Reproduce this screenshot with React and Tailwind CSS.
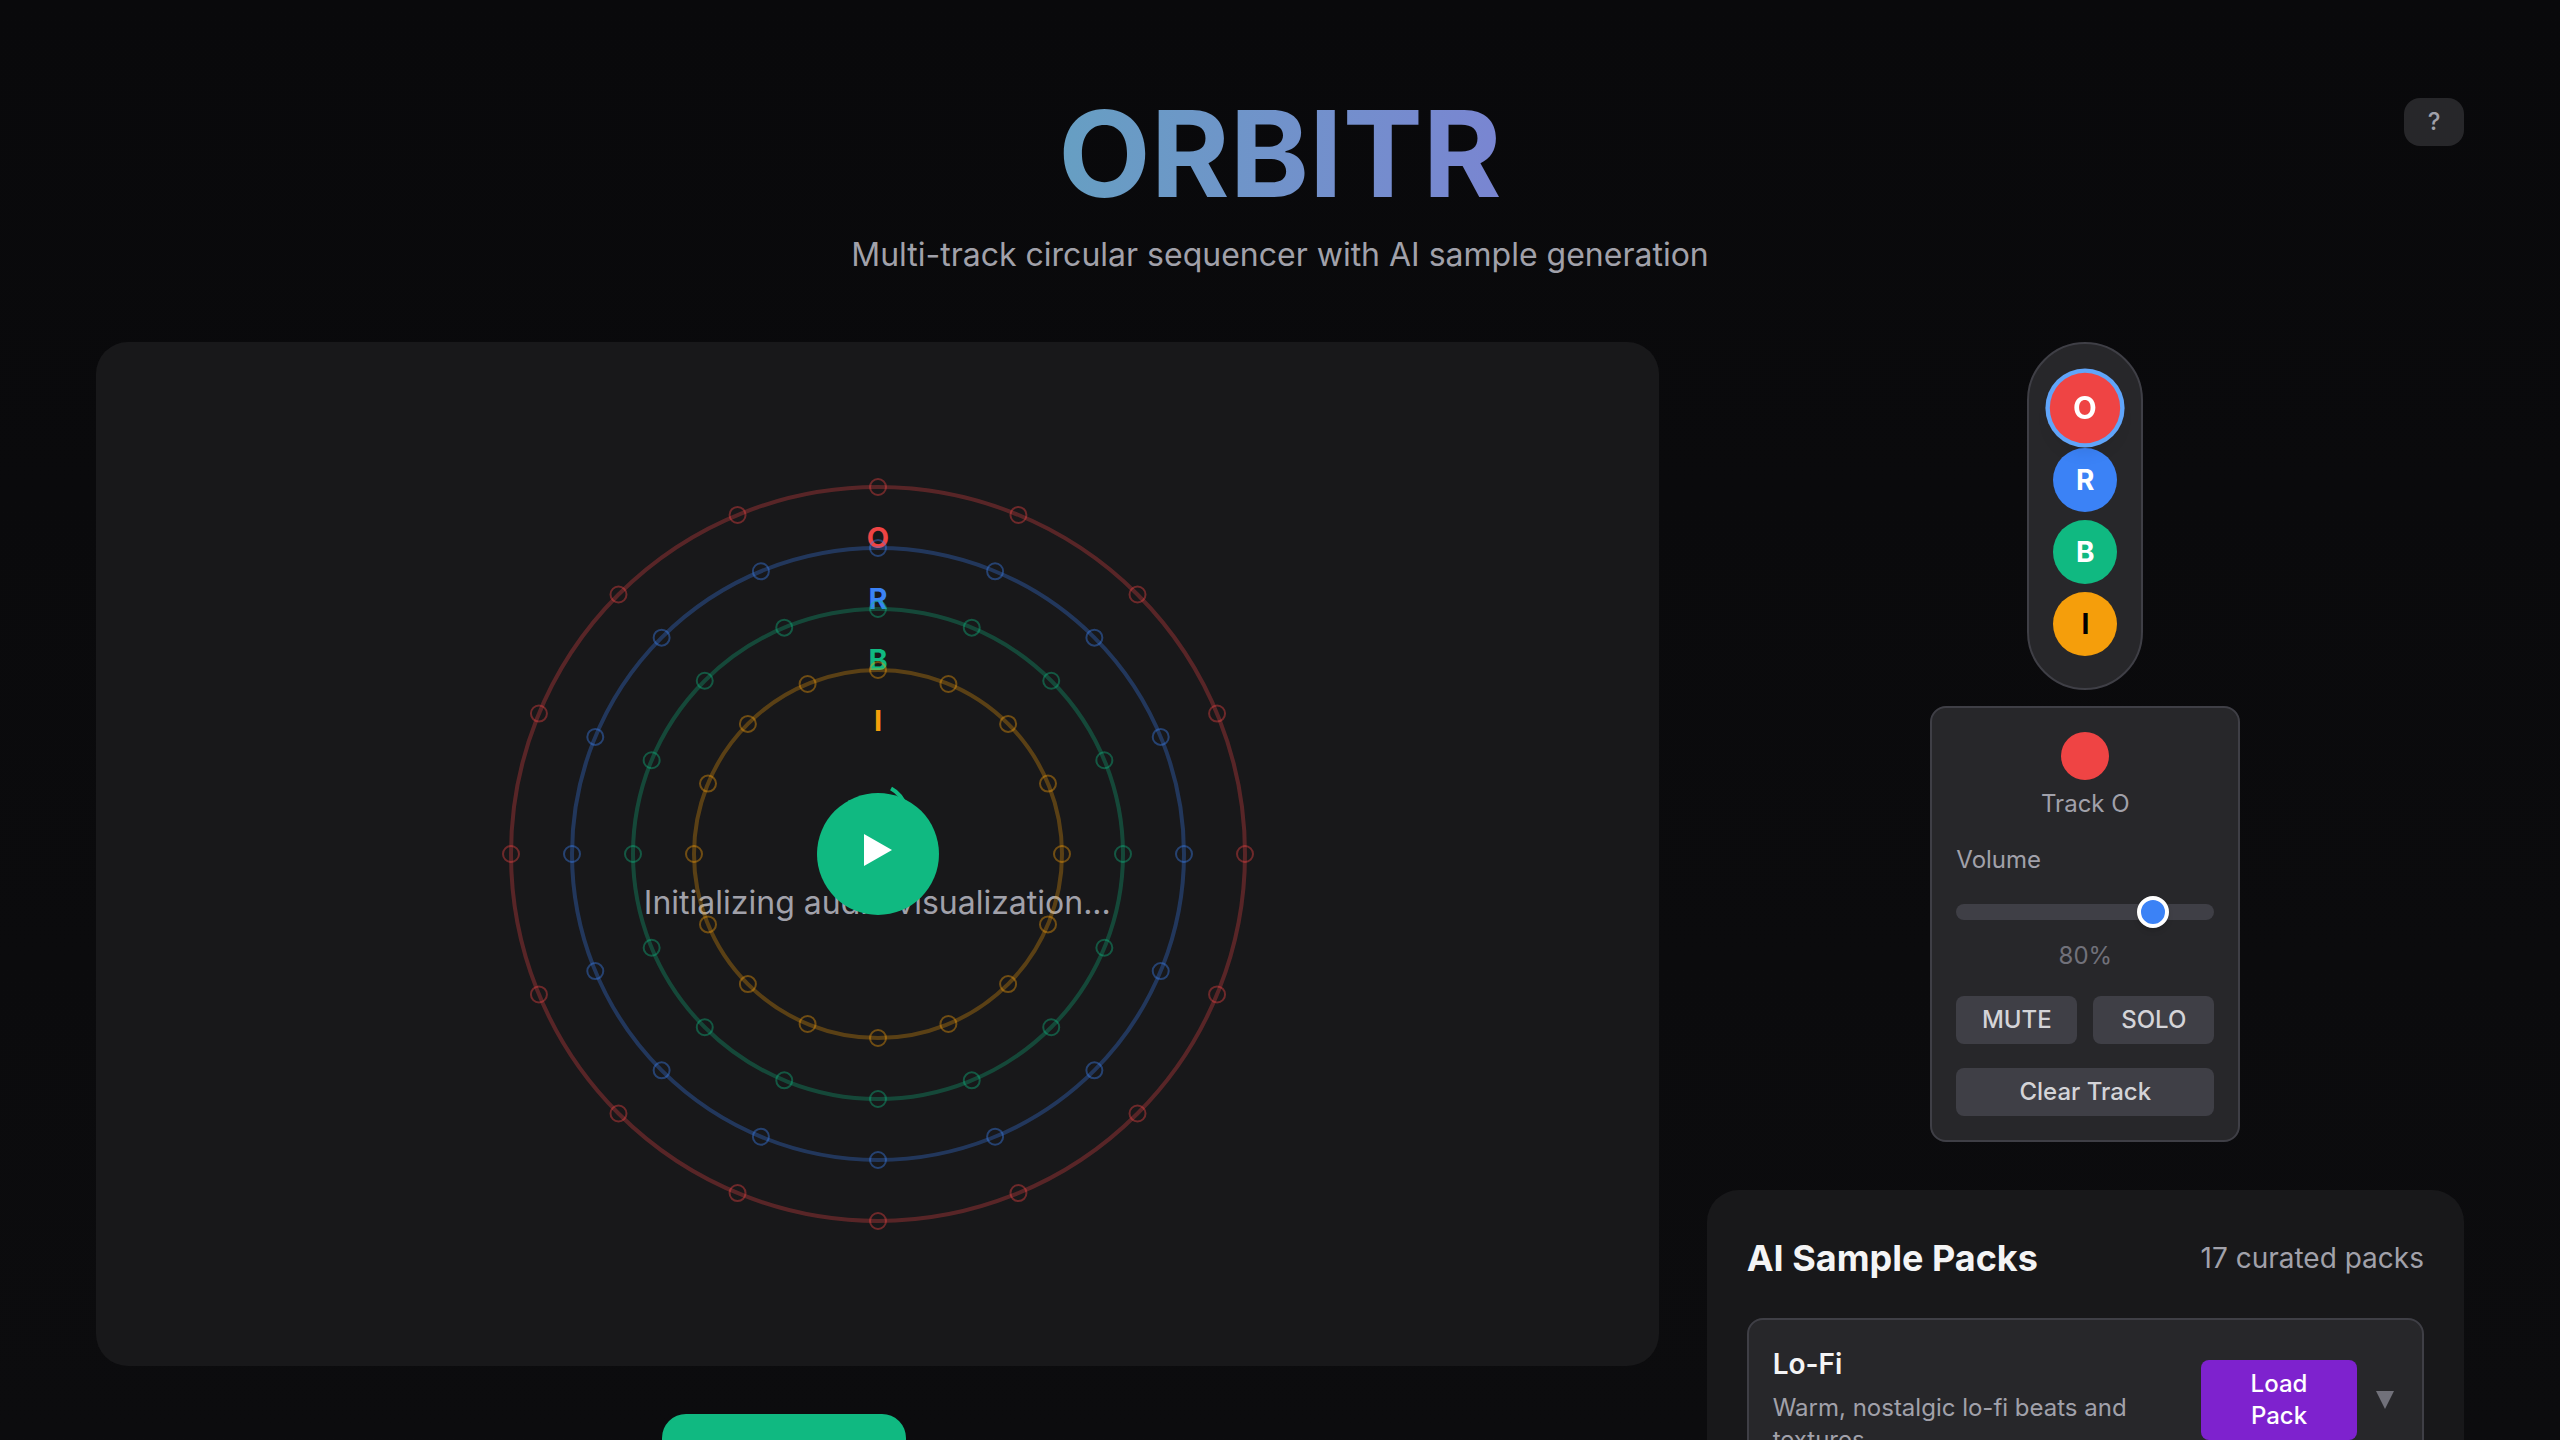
const TRACKS = [
  { name: "O", color: "#ef4444", radius: 367, button: "scale-110 bg-[#ef4444] text-white ring-4 ring-[#60a5fa] shadow-lg" },
  { name: "R", color: "#3b82f6", radius: 306, button: "bg-[#3b82f6] text-white" },
  { name: "B", color: "#10b981", radius: 245, button: "bg-[#10b981] text-white" },
  { name: "I", color: "#f59e0b", radius: 184, button: "bg-[#f59e0b] text-black" },
];

const STEPS = Array.from({ length: 16 }, (_, i) => (i * Math.PI) / 8);

function Orbit({ track }) {
  return (
    <g>
      <circle r={track.radius} fill="none" stroke={track.color} strokeWidth="4" opacity="0.3" />
      {STEPS.map((angle) => (
        <circle
          key={angle}
          cx={Math.sin(angle) * track.radius}
          cy={-Math.cos(angle) * track.radius}
          r="8"
          fill="none"
          stroke={track.color}
          strokeWidth="2"
          opacity="0.4"
        />
      ))}
      <text y={61 - track.radius} textAnchor="middle" fill={track.color} className="text-[29px] font-bold">
        {track.name}
      </text>
    </g>
  );
}

function Sequencer() {
  return (
    <section className="relative flex h-[1024px] items-center justify-center rounded-[32px] bg-[#18181a]">
      <div className="flex flex-col items-center gap-8 pt-0.5">
        <div className="size-16 -rotate-[17deg] rounded-full border-4 border-[#10b981] border-t-transparent" />
        <p className="text-[32px] leading-12 text-[#a1a1aa]">Initializing audio visualization...</p>
      </div>
      <div className="absolute inset-0 flex items-center justify-center pl-0.5">
        <svg width="800" height="800" viewBox="-400 -400 800 800" aria-label="Orbits">
          {TRACKS.map((t) => (
            <Orbit key={t.name} track={t} />
          ))}
        </svg>
      </div>
      <div className="absolute inset-0 flex items-center justify-center pl-0.5">
        <button aria-label="Play" className="size-[122px] rounded-full bg-[#10b981]">
          <svg viewBox="0 0 122 122" className="size-full">
            <path d="M47 41 L75 57 L47 73 Z" fill="white" />
          </svg>
        </button>
      </div>
    </section>
  );
}

function TrackPicker() {
  return (
    <nav className="flex flex-col items-center gap-2 rounded-full border-2 border-[#3f3f46] bg-[#27272a] px-6 py-8">
      {TRACKS.map((t) => (
        <button key={t.name} className={"size-16 rounded-full text-[28px] leading-10 font-bold " + t.button}>
          {t.name}
        </button>
      ))}
    </nav>
  );
}

function TrackControls() {
  const button = "h-12 rounded-lg bg-[#3f3f46] text-2xl leading-8 font-medium text-[#d4d4d8]";
  return (
    <div className="flex w-[310px] flex-col rounded-2xl border-2 border-[#3f3f46] bg-[#27272a] p-6 text-2xl leading-8">
      <div className="flex flex-col items-center gap-2 text-[#a1a1aa]">
        <span className="size-12 rounded-full bg-[#ef4444]" />
        <span>Track O</span>
      </div>
      <label htmlFor="volume" className="mt-6 text-[#a1a1aa]">
        Volume
      </label>
      <input
        id="volume"
        type="range"
        min="0"
        max="100"
        defaultValue="80"
        className="mt-7 mb-5 h-4 w-full appearance-none rounded-lg bg-[#3f3f46] [&::-webkit-slider-thumb]:size-8 [&::-webkit-slider-thumb]:appearance-none [&::-webkit-slider-thumb]:rounded-full [&::-webkit-slider-thumb]:border-4 [&::-webkit-slider-thumb]:border-white [&::-webkit-slider-thumb]:bg-[#3b82f6] [&::-webkit-slider-thumb]:shadow-md"
      />
      <span className="text-center text-[#71717a]">80%</span>
      <div className="mt-6 grid grid-cols-2 gap-4">
        <button className={button}>MUTE</button>
        <button className={button}>SOLO</button>
      </div>
      <button className={"mt-6 " + button}>Clear Track</button>
    </div>
  );
}

function SamplePacks() {
  return (
    <section className="flex w-full flex-col gap-8 rounded-[32px] bg-[#18181a] p-10">
      <div className="flex items-center justify-between">
        <h2 className="text-4xl leading-14 font-bold text-[#f4f4f5]">AI Sample Packs</h2>
        <span className="text-[28px] leading-10 text-[#a1a1aa]">17 curated packs</span>
      </div>
      <article className="flex items-center gap-4 rounded-2xl border-2 border-[#3f3f46] bg-[#27272a] p-6">
        <div className="flex flex-1 flex-col gap-2">
          <h3 className="text-[28px] leading-10 font-semibold text-[#f4f4f5]">Lo-Fi</h3>
          <p className="text-2xl leading-8 text-[#a1a1aa]">Warm, nostalgic lo-fi beats and textures</p>
        </div>
        <button className="w-[156px] rounded-lg bg-[#7e22ce] px-6 py-2 text-2xl leading-8 font-medium text-white">
          Load Pack
        </button>
        <button aria-label="Expand Lo-Fi" className="flex w-[25px] justify-center">
          <svg viewBox="0 0 18 18" className="size-[18px]">
            <path d="M0 0 H18 L9 18 Z" fill="#71717a" />
          </svg>
        </button>
      </article>
    </section>
  );
}

export default function App() {
  return (
    <div className="h-screen overflow-hidden bg-linear-to-b from-[#09090b] to-[#0c0c0e] px-24 font-[Inter,sans-serif]">
      <header className="relative flex flex-col items-center pt-[94px] pb-[62px]">
        <div className="flex flex-col gap-4 text-center">
          <h1 className="bg-linear-to-r from-[#5aaabb] to-[#8078d8] bg-clip-text text-[120px] leading-none font-bold text-transparent">
            ORBITR
          </h1>
          <p className="text-[32px] leading-[50px] text-[#a1a1aa]">
            Multi-track circular sequencer with AI sample generation
          </p>
        </div>
        <button className="absolute top-[98px] right-0 h-12 w-[60px] rounded-2xl bg-[#27272a] text-2xl leading-8 font-medium text-[#a1a1aa]">
          ?
        </button>
      </header>
      <main className="grid grid-cols-3 items-start gap-12">
        <div className="col-span-2 flex flex-col gap-12">
          <Sequencer />
          <div className="flex justify-center">
            <button aria-label="Play sequence" className="h-24 w-[244px] rounded-3xl bg-[#10b981]" />
            <div className="w-[186px]" />
          </div>
        </div>
        <aside className="flex flex-col items-center">
          <TrackPicker />
          <div className="mt-4 mb-12">
            <TrackControls />
          </div>
          <SamplePacks />
        </aside>
      </main>
    </div>
  );
}
